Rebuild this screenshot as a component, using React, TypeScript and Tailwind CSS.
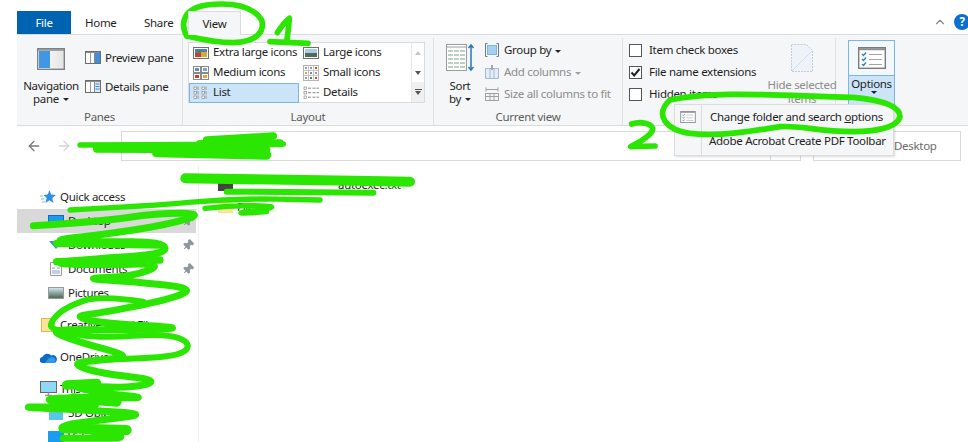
import { ArrowLeft, ArrowRight, ChevronUp, Pin } from 'lucide-react';
import type { ReactNode } from 'react';

const GREEN = '#2AE600';

function PhotoIcon({ tone }: { tone: 'xl' | 'lg' }) {
  return (
    <svg width="16" height="12" viewBox="0 0 16 12" className="shrink-0">
      <rect x="0.5" y="0.5" width="15" height="11" fill="#fff" stroke="#6f6f6f" />
      {tone === 'xl' ? (
        <>
          <rect x="2" y="2" width="12" height="8" fill="#4f7fb8" />
          <rect x="2" y="6" width="6" height="4" fill="#c9402f" />
          <rect x="8" y="5" width="6" height="5" fill="#d8a92f" />
          <rect x="5" y="3" width="3" height="3" fill="#3e8e4e" />
        </>
      ) : (
        <>
          <rect x="2" y="2" width="12" height="4" fill="#a9cde8" />
          <rect x="2" y="6" width="12" height="4" fill="#4f6b5a" />
        </>
      )}
    </svg>
  );
}

function MediumIcon() {
  const cells = [
    [1, 1, '#5b8fd0'],
    [9, 1, '#7aa5cf'],
    [1, 8, '#c9402f'],
    [9, 8, '#d8a92f'],
  ] as const;
  return (
    <svg width="16" height="14" viewBox="0 0 16 14" className="shrink-0">
      {cells.map(([x, y, c]) => (
        <g key={`${x}-${y}`}>
          <rect x={x - 0.5} y={y - 0.5} width="7" height="6" fill="#fff" stroke="#8a8a8a" />
          <rect x={x + 1} y={y + 1} width="4" height="3" fill={c} />
        </g>
      ))}
    </svg>
  );
}

function SmallIcon() {
  const spots = ['#7aa5cf', '#999', '#c9402f', '#d8a92f', '#5b8fd0', '#999', '#999', '#3e8e4e', '#c9402f'];
  return (
    <svg width="16" height="16" viewBox="0 0 16 16" className="shrink-0">
      <rect x="0.5" y="0.5" width="15" height="15" fill="#fff" stroke="#b5b5b5" />
      <path d="M5.500 1v14M10.500 1v14M1 5.500h14M1 10.500h14" stroke="#c4c4c4" />
      {spots.map((c, i) => (
        <rect key={i} x={2 + (i % 3) * 5} y={2 + Math.floor(i / 3) * 5} width="2" height="2" fill={c} />
      ))}
    </svg>
  );
}

function ListIcon({ wide }: { wide?: boolean }) {
  const xs = wide ? [1] : [1, 9];
  return (
    <svg width="16" height="14" viewBox="0 0 16 14" className="shrink-0">
      {xs.map((x) =>
        [1, 5.5, 10].map((y) => (
          <g key={`${x}-${y}`}>
            <rect x={x} y={y} width="2.5" height="2.5" fill="#fff" stroke="#777" strokeWidth="0.6" />
            {wide ? (
              <path d={`M5 ${y + 1.2}h3M9.500 ${y + 1.2}h3M13.500 ${y + 1.2}h2.500`} stroke="#888" />
            ) : (
              <path d={`M${x + 4} ${y - 0.5}v3.500`} stroke="#999" />
            )}
          </g>
        )),
      )}
    </svg>
  );
}

function PaneIcon({ side }: { side: 'preview' | 'details' }) {
  return (
    <svg width="16" height="13" viewBox="0 0 16 13" className="shrink-0">
      <rect x="0.5" y="0.5" width="15" height="12" fill="#fff" stroke="#6d6d6d" />
      <path d="M1 1.500H15" stroke="#8d8d8d" />
      <path d="M5.500 2v10" stroke="#9a9a9a" />
      {side === 'preview' ? (
        <rect x="10" y="2" width="5" height="10" fill="#3f8fdc" />
      ) : (
        <>
          <rect x="10" y="2" width="5" height="10" fill="#d7e9f8" />
          <path d="M10.500 4h4M10.500 6.500h4M10.500 9h4" stroke="#3f8fdc" />
        </>
      )}
      <path d="M9.500 2v10" stroke="#8a8a8a" />
    </svg>
  );
}

function Caret({ muted }: { muted?: boolean }) {
  return (
    <span
      className={`inline-block ml-1 align-middle w-0 h-0 border-x-[3px] border-x-transparent border-t-[3px] ${
        muted ? 'border-t-[#a0a0a0]' : 'border-t-[#222]'
      }`}
    />
  );
}

function Group({ width, label, children }: { width: string; label?: string; children: ReactNode }) {
  return (
    <div className={`${width} shrink-0 h-full flex flex-col border-r border-[#e1e2e3]`}>
      <div className="flex-1 min-h-0">{children}</div>
      <div className="h-[19px] pt-[3px] text-center leading-[15px] text-[#5c5c5c]">{label}</div>
    </div>
  );
}

function GalleryItem({ icon, label, active }: { icon: ReactNode; label: string; active?: boolean }) {
  return (
    <div
      className={`h-5 flex items-center gap-1 pl-[3px] border ${
        active ? 'bg-[#cce4f7] border-[#7db5e8]' : 'border-transparent'
      }`}
    >
      <span className="w-4 flex justify-center shrink-0">{icon}</span>
      <span className="-mt-[2px]">{label}</span>
    </div>
  );
}

function CheckRow({ label, checked }: { label: string; checked?: boolean }) {
  return (
    <div className="h-[22px] flex items-center gap-[7px]">
      <span className="w-[13px] h-[13px] bg-white border border-[#555] flex items-center justify-center">
        {checked && (
          <svg width="11" height="11" viewBox="0 0 11 11">
            <path d="M1.5 5.500l2.700 3L9.500 2" fill="none" stroke="#222" strokeWidth="2" />
          </svg>
        )}
      </span>
      <span>{label}</span>
    </div>
  );
}

function OptionsIcon({ small }: { small?: boolean }) {
  return (
    <svg width={small ? 16 : 28} height={small ? 12 : 22} viewBox="0 0 28 22" className="shrink-0">
      <rect x="0.7" y="0.7" width="26.6" height="20.600" fill="#fff" stroke="#7a7a7a" strokeWidth="1.400" />
      <path d="M1 2.200H27" stroke="#8d8d8d" strokeWidth="2" />
      <path d="M4 7l1.500 1.500L8 5.500M4 12l1.500 1.500L8 10.500M4 17l1.500 1.500L8 15.500" fill="none" stroke="#2f7fd0" strokeWidth="1.400" />
      <path d="M11 7.500h13M11 12.500h13M11 17.500h13" stroke="#a5a5a5" />
    </svg>
  );
}

function NavRow({ icon, label, pinned, className }: { icon: ReactNode; label: string; pinned?: boolean; className?: string }) {
  return (
    <div className={`h-6 flex items-center relative ${className ?? ''}`}>
      <span className="w-5 flex justify-center shrink-0">{icon}</span>
      <span className="ml-[2px]">{label}</span>
      {pinned && <Pin size={12} className="absolute left-[165px] top-[6px] rotate-45 text-[#8f979e] fill-[#8f979e]" />}
    </div>
  );
}

// marker strokes, traced point by point on a 3x grid
type Stroke = { w: number; pts: number[][] };

const STROKES: Stroke[] = [
  // address bar smear
  { w: 16, pts: [[240, 435], [850, 432]] },
  { w: 22, pts: [[290, 447], [800, 450]] },
  { w: 28, pts: [[470, 458], [800, 465]] },
  { w: 22, pts: [[620, 420], [820, 408]] },
  { w: 24, pts: [[600, 432], [840, 430]] },
  // top of the file list
  { w: 30, pts: [[556, 535], [900, 540], [1230, 545]] },
  { w: 18, pts: [[680, 575], [1120, 578]] },
  { w: 16, pts: [[210, 630], [450, 618], [700, 595], [960, 600]] },
  { w: 16, pts: [[615, 625], [700, 615], [855, 620], [690, 642], [800, 635]] },
  // sidebar zigzag
  {
    w: 21,
    pts: [
      [100, 677], [300, 665], [470, 640], [615, 640], [500, 675], [300, 705], [140, 722], [300, 725], [490, 725],
      [500, 762], [300, 775], [140, 790], [300, 795], [495, 790], [400, 830], [240, 835], [400, 845], [590, 865],
      [500, 900], [300, 940], [220, 948], [300, 970], [590, 985], [300, 990], [140, 988], [230, 1025], [400, 1070],
      [300, 1080], [210, 1090], [300, 1120], [480, 1140], [400, 1165], [200, 1155], [300, 1180], [460, 1195],
      [250, 1190], [100, 1200], [360, 1220], [15, 1220], [250, 1230], [450, 1242], [300, 1260], [160, 1280],
      [300, 1295], [395, 1315], [190, 1315],
    ],
  },
  { w: 18, pts: [[430, 905], [300, 885], [200, 920], [155, 960], [150, 990], [300, 1015], [500, 1000], [575, 1030], [540, 1070], [300, 1080]] },
  { w: 28, pts: [[200, 1155], [290, 1150]] },
  { w: 30, pts: [[220, 1195], [350, 1205]] },
  { w: 30, pts: [[190, 1285], [380, 1290]] },
  { w: 22, pts: [[170, 730], [480, 735]] },
  { w: 22, pts: [[170, 785], [480, 780]] },
];

function smooth(pts: number[][]) {
  let d = `M${pts[0][0]} ${pts[0][1]}`;
  for (let i = 1; i < pts.length - 1; i++) {
    const mx = (pts[i][0] + pts[i + 1][0]) / 2;
    const my = (pts[i][1] + pts[i + 1][1]) / 2;
    d += `Q${pts[i][0]} ${pts[i][1]} ${mx} ${my}`;
  }
  const last = pts[pts.length - 1];
  return `${d}L${last[0]} ${last[1]}`;
}

const MARKS = [
  // View circle and the 1
  'M560 108C540 70 550 25 620 15C700 5 760 20 785 60C795 95 770 125 700 128C640 128 590 115 560 108',
  'M832 98C845 78 860 60 868 55C866 85 862 110 860 126M810 125L924 130',
  // circle round the menu entry and the 2
  'M2010 300C2150 270 2350 288 2560 292C2650 300 2700 320 2700 350C2690 385 2620 395 2560 395C2450 395 2400 375 2340 380C2250 395 2150 410 2070 400C2000 390 1960 345 2010 300',
  'M1895 372C1925 362 1960 372 1958 390C1950 412 1910 430 1892 440L1965 438',
];

export default function App() {
  return (
    <div className="relative w-[968px] h-[442px] overflow-hidden bg-white text-[#1e1e1e] text-[11.5px] whitespace-nowrap font-['Noto_Sans',sans-serif] tracking-[-0.3px]">
      <div className="pl-[17px] pt-[11px]">
        {/* tabs */}
        <div className="h-[23px] flex items-stretch relative">
          <div className="w-[54px] bg-[#0063b1] text-white flex items-center justify-center">File</div>
          <div className="ml-[14px] w-[30px] flex items-center">Home</div>
          <div className="ml-[29px] w-[29px] flex items-center">Share</div>
          <div className="ml-[15px] w-[53px] bg-[#f5f6f7] border-x border-t border-[#dadbdc] flex items-center justify-center -mb-px z-10">
            View
          </div>
          <ChevronUp size={14} className="absolute left-[916px] top-[4px] text-[#8a8a8a]" />
          <div className="absolute left-[937px] top-[3px] w-4 h-4 rounded-full bg-[#0a6fd0] text-white font-bold flex items-center justify-center">
            ?
          </div>
        </div>

        {/* ribbon */}
        <div className="h-[92px] bg-[#f5f6f7] border-y border-[#dadbdc] flex pt-[3px]">
          <Group width="w-[166px]" label="Panes">
            <div className="flex h-full">
              <div className="w-[68px] flex flex-col items-center pt-[10px] leading-[13px]">
                <svg width="28" height="22" viewBox="0 0 28 22">
                  <defs>
                    <linearGradient id="navfade" x1="0" x2="1">
                      <stop offset="0" stopColor="#ffffff" />
                      <stop offset="1" stopColor="#e4e4e4" />
                    </linearGradient>
                  </defs>
                  <rect x="0.700" y="0.700" width="26.600" height="20.600" fill="url(#navfade)" stroke="#808080" strokeWidth="1.400" />
                  <path d="M1 2H27" stroke="#8d8d8d" strokeWidth="1.500" />
                  <rect x="2" y="3" width="11" height="17" fill="#4098e4" />
                </svg>
                <span className="mt-[9px]">Navigation</span>
                <span>
                  pane
                  <Caret />
                </span>
              </div>
              <div className="flex flex-col pt-[13px] gap-[16px]">
                <div className="h-[13px] flex items-center gap-1">
                  <PaneIcon side="preview" />
                  Preview pane
                </div>
                <div className="h-[13px] flex items-center gap-1">
                  <PaneIcon side="details" />
                  Details pane
                </div>
              </div>
            </div>
          </Group>

          <Group width="w-[251px]" label="Layout">
            <div className="ml-[5px] mt-[4px] w-[237px] h-[61px] border border-[#dadbdc] bg-white flex">
              <div className="w-[222px] grid grid-cols-[110px_112px]">
                <GalleryItem icon={<PhotoIcon tone="xl" />} label="Extra large icons" />
                <GalleryItem icon={<PhotoIcon tone="lg" />} label="Large icons" />
                <GalleryItem icon={<MediumIcon />} label="Medium icons" />
                <GalleryItem icon={<SmallIcon />} label="Small icons" />
                <GalleryItem icon={<ListIcon />} label="List" active />
                <GalleryItem icon={<ListIcon wide />} label="Details" />
              </div>
              <div className="flex-1 border-l border-[#e8e8e8] flex flex-col items-center text-[#666]">
                <div className="h-5 flex items-center">
                  <span className="w-0 h-0 border-x-[3px] border-x-transparent border-b-[4px] border-b-[#c4c4c4]" />
                </div>
                <div className="h-5 flex items-center">
                  <span className="w-0 h-0 border-x-[3px] border-x-transparent border-t-[4px] border-t-[#555]" />
                </div>
                <div className="h-5 w-full flex flex-col items-center justify-center bg-[#f0f0f0]">
                  <span className="w-[7px] h-px bg-[#555] mb-px" />
                  <span className="w-0 h-0 border-x-[3px] border-x-transparent border-t-[4px] border-t-[#555]" />
                </div>
              </div>
            </div>
          </Group>

          <Group width="w-[189px]" label="Current view">
            <div className="flex h-full pl-[6px]">
              <div className="w-[40px] flex flex-col items-center pt-[6px] leading-[13px]">
                <svg width="28" height="28" viewBox="0 0 28 28">
                  <rect x="0.500" y="0.500" width="20" height="26" fill="#fff" stroke="#9a9a9a" />
                  <path d="M1 3h19" stroke="#9a9a9a" />
                  <path d="M2 7h17M2 11h17M2 15h17M2 19h17M2 23h17" stroke="#bcd0c4" strokeWidth="2" strokeDasharray="5 1" />
                  <path d="M25 1v25M22.500 4L25 1l2.500 3M22.500 23l2.500 3 2.500-3" fill="none" stroke="#2a76bd" strokeWidth="1.500" />
                </svg>
                <span className="mt-[7px]">Sort</span>
                <span>
                  by
                  <Caret />
                </span>
              </div>
              <div className="flex flex-col pt-[1px] ml-[5px]">
                <div className="h-[22px] flex items-center gap-[5px]">
                  <svg width="14" height="14" viewBox="0 0 14 14">
                    <path d="M2.500.500H.500v13h2M11.500.500h2v13h-2" fill="none" stroke="#777" />
                    <rect x="2.500" y="2.500" width="9" height="9" fill="#a8d0f0" stroke="#7db5e8" />
                  </svg>
                  <span>
                    Group by
                    <Caret />
                  </span>
                </div>
                <div className="h-[22px] flex items-center gap-[5px] text-[#8c8c8c]">
                  <svg width="14" height="14" viewBox="0 0 14 14">
                    <path d="M.500 3.500h13v10H.500zM5 3.500v10M9 3.500v10" fill="#e3edf7" stroke="#a5b9cf" />
                    <path d="M7 0v5" stroke="#a5a5a5" strokeWidth="2" />
                  </svg>
                  <span>
                    Add columns
                    <Caret muted />
                  </span>
                </div>
                <div className="h-[22px] flex items-center gap-[5px] text-[#8c8c8c]">
                  <svg width="14" height="14" viewBox="0 0 14 14">
                    <path d="M.500 6.500h13v7H.500zM.500 9.500h13M5 6.500v7M9 6.500v7M1 2.500h12M1 .500v4M13 .500v4" fill="none" stroke="#9f9f9f" />
                  </svg>
                  Size all columns to fit
                </div>
              </div>
            </div>
          </Group>

          <Group width="w-[213px]" label="Show/hide">
            <div className="flex h-full pl-[6px] pt-[1px]">
              <div className="w-[140px]">
                <CheckRow label="Item check boxes" />
                <CheckRow label="File name extensions" checked />
                <CheckRow label="Hidden items" />
              </div>
              <div className="flex flex-col items-center text-[#8c8c8c] leading-[14px] w-[66px] shrink-0">
                <svg width="22" height="28" viewBox="0 0 22 28" className="mt-[5px]">
                  <path d="M.500.500h15l6 6v21H.500z" fill="#eef3fa" stroke="#c4ccd6" strokeDasharray="2 1" />
                  <path d="M1 27L21 7" stroke="#d5dde6" />
                </svg>
                <span className="mt-[6px]">Hide selected</span>
                <span>items</span>
              </div>
            </div>
          </Group>

          <div className="ml-[12px] w-[47px] mt-[2px] h-[65px] border border-[#7db5e8] flex flex-col">
            <div className="h-[35px] bg-[#f2f8fd] flex items-center justify-center border-b border-[#7db5e8]">
              <OptionsIcon />
            </div>
            <div className="flex-1 bg-[#cce4f7] flex flex-col items-center pt-[1px] leading-[14px]">
              Options
              <Caret />
            </div>
          </div>
        </div>
      </div>

      {/* address row */}
      <div className="h-[40px] flex items-center">
        <ArrowLeft size={16} className="ml-[26px] text-[#7a7a7a]" />
        <ArrowRight size={16} className="ml-[14px] text-[#d6d6d6]" />
        <div className="ml-[49px] h-[30px] w-[650px] border border-[#d9d9d9]" />
        <div className="h-[30px] w-[30px] border-y border-r border-[#d9d9d9]" />
        <div className="ml-3 h-[30px] w-[148px] border border-[#d9d9d9] flex items-center pl-[80px] text-[#6b6b6b]">
          Desktop
        </div>
      </div>

      {/* body */}
      <div className="flex">
        <div className="ml-[17px] w-[182px] h-[277px] border-r border-[#efefef] pr-[2px] pt-[19px]">
          <NavRow
            className="pl-[21px]"
            label="Quick access"
            icon={
              <svg width="16" height="14" viewBox="0 0 16 14">
                <path d="M9.500 0l1.600 4.500L16 5l-3.700 3 1.200 5-4-2.700L5.500 13l1.200-5L3.500 5l4.300-.4z" fill="#2f8fe8" />
                <path d="M0 6h3M1 9h3M2 12h3" stroke="#7cbcf0" />
              </svg>
            }
          />
          <NavRow
            className="pl-[29px] bg-[#d9d9d9]"
            label="Desktop"
            pinned
            icon={<span className="w-4 h-3 bg-[#1a9cf0] border border-[#0f6cc4]" />}
          />
          <NavRow
            className="pl-[29px]"
            label="Downloads"
            pinned
            icon={<span className="w-0 h-0 border-x-[7px] border-x-transparent border-t-[8px] border-t-[#3d8fe0]" />}
          />
          <NavRow
            className="pl-[29px]"
            label="Documents"
            pinned
            icon={
              <svg width="12" height="14" viewBox="0 0 12 14">
                <path d="M.500.500h11v13H.500z" fill="#fff" stroke="#999" />
                <path d="M2 6h3M2 9h8M2 11h8M7 6h3" stroke="#7aa5cf" />
              </svg>
            }
          />
          <NavRow
            className="pl-[29px]"
            label="Pictures"
            icon={<span className="w-4 h-3 border border-[#999] bg-gradient-to-b from-[#cfe3f2] to-[#4e6a52]" />}
          />
          <NavRow
            className="pl-[21px] mt-2"
            label="Creative Cloud Files"
            icon={<span className="w-[14px] h-[14px] bg-[#fbe39a] border border-[#e2b94c]" />}
          />
          <NavRow
            className="pl-[21px] mt-2"
            label="OneDrive"
            icon={
              <svg width="17" height="11" viewBox="0 0 17 11">
                <path d="M3 11a3 3 0 0 1-.5-6A5 5 0 0 1 11 3.500a3.500 3.500 0 0 1 3.500 7.500z" fill="#0f6cc4" />
                <path d="M5 11l4-5 2.500-1a3.500 3.500 0 0 1 3 6z" fill="#2f9be8" />
              </svg>
            }
          />
          <NavRow
            className="pl-[21px] mt-2"
            label="This PC"
            icon={
              <svg width="17" height="16" viewBox="0 0 17 16">
                <rect x="0.500" y="0.500" width="16" height="11" fill="#8fd8f8" stroke="#666" />
                <path d="M5 14.500h7M8.500 11.500V14" stroke="#999" strokeWidth="1.500" />
              </svg>
            }
          />
          <NavRow
            className="pl-[29px]"
            label="3D Objects"
            icon={<span className="w-[14px] h-[14px] bg-[#58c7e8]" />}
          />
          <NavRow className="pl-[29px]" label="Videos" icon={<span className="w-4 h-3 bg-[#1a9cf0]" />} />
        </div>
        <div className="pl-[19px] pt-[8px]">
          <div className="h-[22px] flex items-center gap-[105px]">
            <span className="w-[15px] h-3 bg-[#444]" />
            <span>autoexec.txt</span>
          </div>
          <div className="h-[22px] flex items-center gap-1">
            <span className="w-[15px] h-3 bg-[#fbe39a]" />
            <span>Files</span>
          </div>
        </div>
      </div>

      {/* options drop-down */}
      <div className="absolute left-[674px] top-[104px] w-[220px] h-[52px] bg-[#f5f6f7] border border-[#dcdcdc] shadow-[1px_1px_2px_rgba(0,0,0,0.15)] flex flex-col">
        <div className="absolute left-[26px] top-0 bottom-0 w-px bg-[#dcdcdc]" />
        <div className="h-[24px] flex items-center pl-[5px] gap-[14px]">
          <OptionsIcon small />
          <span>
            Change folder and search <span className="underline">o</span>ptions
          </span>
        </div>
        <div className="h-[24px] flex items-center pl-[34px]">Adobe Acrobat Create PDF Toolbar</div>
      </div>

      {/* green marker annotations */}
      <svg
        className="absolute inset-0 pointer-events-none"
        width="968"
        height="442"
        viewBox="0 0 2904 1326"
        fill="none"
        stroke={GREEN}
        strokeLinecap="round"
        strokeLinejoin="round"
      >
        {MARKS.map((d, i) => (
          <path key={i} d={d} strokeWidth={17} />
        ))}
        {STROKES.map((s, i) => (
          <path key={i} d={smooth(s.pts)} strokeWidth={s.w} />
        ))}
      </svg>
    </div>
  );
}
